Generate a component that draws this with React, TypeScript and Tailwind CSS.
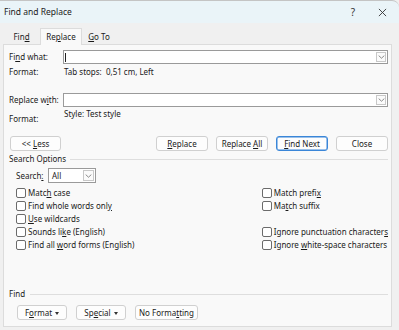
import type { ReactNode } from 'react'

function Chevron() {
  return (
    <svg viewBox="0 0 8 5" className="h-[4px] w-[7px]" aria-hidden="true">
      <path d="M0.5 0.8 L4 4 L7.5 0.8" fill="none" stroke="#606060" strokeWidth="0.9" />
    </svg>
  )
}

function Combo({ width, children }: { width: string; children?: ReactNode }) {
  return (
    <div className={`flex h-[15px] ${width} items-stretch border border-[#9a9a9a] bg-white`}>
      <div className="flex flex-1 items-center pl-[3px]">{children}</div>
      <div className="m-px flex w-[11px] items-center justify-center border border-[#c8c8c8] bg-[#fbfbfb]">
        <Chevron />
      </div>
    </div>
  )
}

function Button({ children, width, focused }: { children: ReactNode; width: string; focused?: boolean }) {
  return (
    <div
      className={`flex h-[15px] ${width} items-center justify-center rounded-[3px] border bg-[#fdfdfd] ${
        focused ? 'border-[#3a86d8] shadow-[inset_0_0_0_0.5px_#3a86d8]' : 'border-[#d0d0d0]'
      }`}
    >
      <span className="whitespace-nowrap">{children}</span>
    </div>
  )
}

function Check({ children }: { children: ReactNode }) {
  return (
    <div className="flex h-[13px] items-center">
      <span className="mr-[2px] h-[10px] w-[10px] shrink-0 rounded-[2px] border border-[#6b6b6b] bg-white" />
      <span className="whitespace-nowrap">{children}</span>
    </div>
  )
}

function U({ children }: { children: ReactNode }) {
  return <span className="underline underline-offset-[1px]">{children}</span>
}

function Caret() {
  return <span className="ml-[3px] inline-block h-0 w-0 border-x-[2.5px] border-t-[3px] border-x-transparent border-t-[#333] align-middle" />
}

export default function App() {
  return (
    <div className="h-[330px] w-[399px] overflow-hidden bg-[#f0f0f0] font-['Noto_Sans',sans-serif] text-[8px] leading-[12px] text-[#1a1a1a]">
      {/* title bar */}
      <div className="flex h-[23px] items-center rounded-tr-[7px] border-t border-[#c4c4c4] bg-[#eaf4f8] pl-[4px]">
        <span className="text-[8.5px]">Find and Replace</span>
        <span className="ml-auto mr-[23px] text-[10px] text-[#333]">?</span>
        <svg viewBox="0 0 10 10" className="mr-[12px] h-[9px] w-[9px]" aria-hidden="true">
          <path d="M1 1 L9 9 M9 1 L1 9" stroke="#333" strokeWidth="1" />
        </svg>
      </div>

      {/* tabs */}
      <div className="ml-[3px] mt-[5px] flex h-[16px] items-end">
        <div className="flex h-[15px] w-[37px] items-center justify-center">
          <span>
            Fin<U>d</U>
          </span>
        </div>
        <div className="relative z-10 -mb-px flex h-[17px] w-[42px] items-center justify-center border-x border-t border-[#dcdcdc] bg-[#f9f9f9]">
          <span>
            Re<U>p</U>lace
          </span>
        </div>
        <div className="flex h-[15px] w-[34px] items-center justify-center">
          <span>
            <U>G</U>o To
          </span>
        </div>
      </div>

      {/* panel */}
      <div className="ml-[3px] flex h-[283px] w-[389px] flex-col border border-[#dcdcdc] bg-[#f9f9f9] pl-[5px] pr-[3px]">
        <div className="mt-[5px] flex h-[14px] items-center">
          <span className="w-[54px]">
            Fi<U>n</U>d what:
          </span>
          <div className="flex h-[14px] flex-1 items-stretch border border-[#9a9a9a] bg-white">
            <div className="flex flex-1 items-center pl-[1px]">
              <span className="h-[9px] w-px bg-[#222]" />
            </div>
            <div className="m-px flex w-[10px] items-center justify-center border border-[#c8c8c8] bg-[#fbfbfb]">
              <Chevron />
            </div>
          </div>
        </div>
        <div className="mt-[2px] flex h-[12px] items-center">
          <span className="w-[55px]">Format:</span>
          <span>Tab stops:&nbsp; 0,51 cm, Left</span>
        </div>

        <div className="mt-[15px] flex h-[14px] items-center">
          <span className="w-[54px]">
            Replace w<U>i</U>th:
          </span>
          <div className="flex h-[14px] flex-1 items-stretch border border-[#9a9a9a] bg-white">
            <div className="flex-1" />
            <div className="m-px flex w-[10px] items-center justify-center border border-[#c8c8c8] bg-[#fbfbfb]">
              <Chevron />
            </div>
          </div>
        </div>
        <div className="mt-px flex h-[18px]">
          <span className="w-[55px] pt-[5px]">Format:</span>
          <span>Style: Test style</span>
        </div>

        <div className="mt-[10px] flex">
          <div className="ml-px">
            <Button width="w-[51px]">
              &lt;&lt; <U>L</U>ess
            </Button>
          </div>
          <div className="ml-auto flex gap-[8px]">
            <Button width="w-[52px]">
              <U>R</U>eplace
            </Button>
            <Button width="w-[52px]">
              Replace <U>A</U>ll
            </Button>
            <Button width="w-[52px]" focused>
              <U>F</U>ind Next
            </Button>
            <Button width="w-[52px]">Close</Button>
          </div>
        </div>

        <div className="mt-[2px] flex h-[12px] items-center">
          <span className="mr-[4px]">Search Options</span>
          <div className="h-px flex-1 bg-[#dedede]" />
        </div>

        <div className="ml-[7px] mt-[3px] flex items-center">
          <span className="w-[32px]">
            Search<U>:</U>
          </span>
          <Combo width="w-[48px]">All</Combo>
        </div>

        <div className="ml-[7px] mt-[3px] flex">
          <div className="flex w-[247px] flex-col">
            <Check>
              Matc<U>h</U> case
            </Check>
            <Check>
              Find whole words onl<U>y</U>
            </Check>
            <Check>
              <U>U</U>se wildcards
            </Check>
            <Check>
              Sounds li<U>k</U>e (English)
            </Check>
            <Check>
              Find all <U>w</U>ord forms (English)
            </Check>
          </div>
          <div className="flex flex-col">
            <Check>
              Match prefi<U>x</U>
            </Check>
            <Check>
              Ma<U>t</U>ch suffix
            </Check>
            <div className="h-[13px]" />
            <Check>
              Ignore punctuation character<U>s</U>
            </Check>
            <Check>
              Ignore <U>w</U>hite-space characters
            </Check>
          </div>
        </div>

        <div className="mt-[37px] flex h-[12px] items-center">
          <span className="mr-[5px]">Find</span>
          <div className="h-px flex-1 bg-[#dedede]" />
        </div>

        <div className="ml-[8px] mt-[5px] flex gap-[9px]">
          <Button width="w-[50px]">
            F<U>o</U>rmat
            <Caret />
          </Button>
          <Button width="w-[50px]">
            Sp<U>e</U>cial
            <Caret />
          </Button>
          <Button width="w-[63px]">
            No Forma<U>t</U>ting
          </Button>
        </div>
      </div>
    </div>
  )
}
